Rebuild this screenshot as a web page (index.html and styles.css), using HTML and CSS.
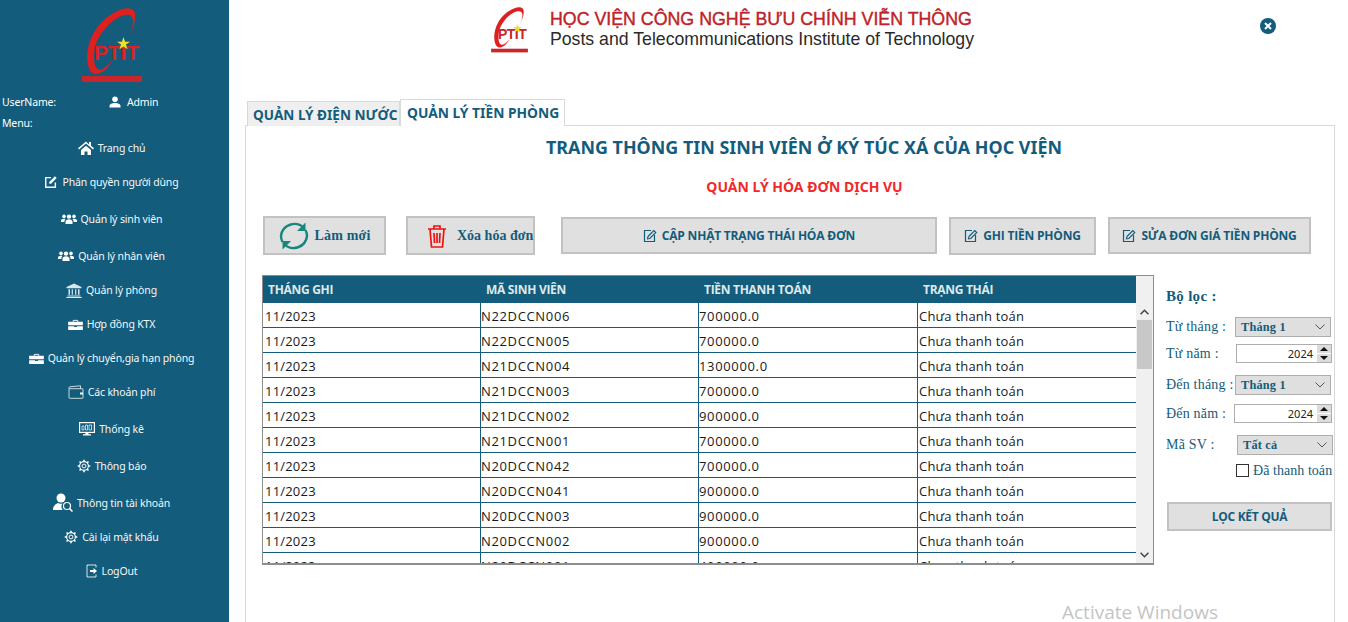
FILE: index.html
```html
<!DOCTYPE html>
<html lang="vi">
<head>
<meta charset="utf-8">
<title>Quản lý tiền phòng</title>
<link rel="stylesheet" href="styles.css">
</head>
<body>
<svg class="defs" width="0" height="0" aria-hidden="true">
  <defs>
    <symbol id="i-edit" viewBox="0 0 16 16"><path d="M13 8.500V14H2V3h6" fill="none" stroke="currentColor" stroke-width="1.600"/><path d="M6 8l6.500-6.500 2 2L8 10H6z" fill="currentColor"/></symbol>
    <symbol id="i-group" viewBox="0 0 16 10"><circle cx="8" cy="2.600" r="2.200" fill="currentColor"/><circle cx="3" cy="2.400" r="1.800" fill="currentColor"/><circle cx="13" cy="2.400" r="1.800" fill="currentColor"/><path d="M4.500 10V8c0-1.700 1.500-2.700 3.500-2.700s3.500 1 3.500 2.700v2z" fill="currentColor"/><path d="M0 8V6.500c0-1 1.300-1.700 3-1.700.6 0 1 .1 1.400.2C3.700 5.700 3.400 6.700 3.400 8zM16 8V6.500c0-1-1.300-1.700-3-1.700-.6 0-1 .1-1.400.2.700.7 1 1.700 1 3z" fill="currentColor"/></symbol>
    <symbol id="i-case" viewBox="0 0 16 12"><path d="M0 3h16v3.800H0zM0 7.800h6.500v1h3v-1H16V12H0z" fill="currentColor"/><path d="M5.500 3V1.500h5V3" fill="none" stroke="currentColor"/></symbol>
    <symbol id="i-gear" viewBox="0 0 16 16"><circle cx="8" cy="8" r="5" fill="none" stroke="currentColor" stroke-width="1.300"/><circle cx="8" cy="8" r="2.200" fill="none" stroke="currentColor" stroke-width="1.100"/><path d="M8 .8v2.400M8 12.800v2.400M.8 8h2.400M12.800 8h2.400M2.900 2.900l1.700 1.700M11.400 11.400l1.700 1.700M2.900 13.100l1.700-1.700M11.400 4.600l1.700-1.700" stroke="currentColor" stroke-width="1.800"/></symbol>
    <symbol id="i-pen" viewBox="0 0 14 14"><path d="M8 1.500H1.500v11h10V6" fill="none" stroke="currentColor" stroke-width="1.200"/><path d="M5 7.500L10.800 1.500l2 2L6.800 9.500l-2.300.4z" fill="none" stroke="currentColor" stroke-width="1.100"/></symbol>
    <symbol id="i-swoosh" viewBox="0 0 60 75">
      <path d="M46 30C52 20 55 8 52 3 48-3 33 1 20 14 8 26 3 44 6 57c2 9 8 11 14 7 4-2 8-7 10-12-4 6-10 11-14 9-4-2-5-11-3-22C17 25 30 10 43 7c5-1 8 1 8 6 0 6-2 11-5 17z" fill="#df2020"/>
      <rect x="0" y="68" width="60" height="6" fill="#c9252b"/>
    </symbol>
    <symbol id="i-star" viewBox="0 0 20 20"><path d="M10 0l2.400 7.200H20l-6.200 4.500 2.400 7.300L10 14.500 3.800 19l2.400-7.300L0 7.200h7.600z" fill="#f0e020"/></symbol>
  </defs>
</svg>

<div class="app">
  <aside class="sidebar">
    <div class="brand">
      <div class="logo">
        <svg class="logo-art"><use href="#i-swoosh"/></svg>
        <span class="logo-text">PTIT</span>
        <svg class="logo-star"><use href="#i-star"/></svg>
      </div>
    </div>
    <div class="user-row">
      <span class="user-label">UserName:</span>
      <span class="user-name">
        <svg class="i-user" viewBox="0 0 12 12"><circle cx="6" cy="3.200" r="2.800" fill="currentColor"/><path d="M.5 11.500V10c0-1.800 2.500-3 5.500-3s5.500 1.200 5.500 3v1.500z" fill="currentColor"/></svg>
        Admin
      </span>
    </div>
    <div class="menu-label">Menu:</div>
    <nav class="nav">
      <a class="nav-item">
        <svg class="ic ic-home" viewBox="0 0 16 14"><path d="M8 .5L0 7.300l1 1.200L8 2.600l7 5.900 1-1.200-3-2.500V1h-2v2.600zM3 9l5-4.200L13 9v5H9.500v-3.500h-3V14H3z" fill="currentColor"/></svg>
        Trang chủ</a>
      <a class="nav-item"><svg class="ic ic-edit"><use href="#i-edit"/></svg>Phân quyền người dùng</a>
      <a class="nav-item tall"><svg class="ic ic-group"><use href="#i-group"/></svg>Quản lý sinh viên</a>
      <a class="nav-item tall"><svg class="ic ic-group"><use href="#i-group"/></svg>Quản lý nhân viên</a>
      <a class="nav-item">
        <svg class="ic ic-bank" viewBox="0 0 16 15"><path d="M8 .5L.5 4v1.200h15V4zM2.500 6.200h1.500v5.600H2.500zM5.700 6.200h1.200v5.600H5.700zM9.100 6.200h1.200v5.600H9.100zM12 6.200h1.500v5.600H12zM1.500 12.500h13v1h-13zM.3 14h15.400v1H.3z" fill="currentColor" opacity=".85"/></svg>
        Quản lý phòng</a>
      <a class="nav-item"><svg class="ic ic-case"><use href="#i-case"/></svg>Hợp đồng KTX</a>
      <a class="nav-item"><svg class="ic ic-case"><use href="#i-case"/></svg>Quản lý chuyển,gia hạn phòng</a>
      <a class="nav-item">
        <svg class="ic ic-wallet" viewBox="0 0 16 14"><path d="M1 3.500V12.500c0 .5.300.8.800.8h12.700c.3 0 .5-.2.500-.5V4.200c0-.3-.2-.5-.5-.5H1.700C1.300 3.700 1 3.300 1 2.800s.3-1 .8-1L12.500.8V3.500" fill="none" stroke="currentColor" stroke-width=".9" opacity=".85"/><rect x="12" y="7.500" width="3" height="2" fill="currentColor"/></svg>
        Các khoản phí</a>
      <a class="nav-item tall">
        <svg class="ic ic-monitor" viewBox="0 0 16 14"><rect x=".6" y=".6" width="14.800" height="9.800" fill="none" stroke="currentColor" stroke-width="1.200"/><path d="M3 4h2v4H3zM6.500 3h2v5h-2zM10 3h2.500v5H10z" fill="none" stroke="currentColor" stroke-width=".7"/><path d="M6.500 11h3v1.300H12V13.500H4V12.300h2.500z" fill="currentColor"/></svg>
        Thống kê</a>
      <a class="nav-item tall"><svg class="ic ic-gear"><use href="#i-gear"/></svg>Thông báo</a>
      <a class="nav-item tall">
        <svg class="ic ic-account" viewBox="0 0 20 20"><circle cx="8" cy="5" r="4.500" fill="currentColor"/><path d="M0 17c0-4 2.500-6 5-7 1.500 1 3 1 4.500.4-1.500 2-1.500 4.500.3 6.600z" fill="currentColor"/><circle cx="14" cy="13" r="3.500" fill="none" stroke="currentColor" stroke-width="1.200"/><path d="M16.500 15.500l3 3" stroke="currentColor" stroke-width="1.500"/></svg>
        Thông tin tài khoản</a>
      <a class="nav-item"><svg class="ic ic-gear"><use href="#i-gear"/></svg>Cài lại mật khẩu</a>
      <a class="nav-item">
        <svg class="ic ic-logout" viewBox="0 0 12 14"><path d="M10 3.500V1H1v12h9v-2.500" fill="none" stroke="currentColor" stroke-width="1" opacity=".85"/><path d="M4 6h3.500V4l3.500 3-3.500 3V8H4z" fill="currentColor"/></svg>
        LogOut</a>
    </nav>
  </aside>

  <main class="content">
    <header class="topbar">
      <div class="org">
        <div class="org-logo">
          <svg class="org-art"><use href="#i-swoosh"/></svg>
          <span class="org-logo-text">PTIT</span>
          <svg class="org-star"><use href="#i-star"/></svg>
        </div>
        <div class="org-names">
          <div class="org-vi">HỌC VIỆN CÔNG NGHỆ BƯU CHÍNH VIỄN THÔNG</div>
          <div class="org-en">Posts and Telecommunications Institute of Technology</div>
        </div>
      </div>
      <svg class="close" viewBox="0 0 16 16"><circle cx="8" cy="8" r="8" fill="#135c7b"/><path d="M5 5l6 6M11 5l-6 6" stroke="#fff" stroke-width="2"/></svg>
    </header>

    <div class="tabs">
      <div class="tab">QUẢN LÝ ĐIỆN NƯỚC</div>
      <div class="tab active">QUẢN LÝ TIỀN PHÒNG</div>
    </div>

    <section class="panel">
      <h1 class="title">TRANG THÔNG TIN SINH VIÊN Ở KÝ TÚC XÁ CỦA HỌC VIỆN</h1>
      <h2 class="subtitle">QUẢN LÝ HÓA ĐƠN DỊCH VỤ</h2>

      <div class="actions">
        <button class="btn btn-serif btn-refresh">
          <svg class="ic-refresh" viewBox="0 0 32 32"><path d="M26 8A13.500 13.500 0 0 0 3 16a13 13 0 0 0 1.500 6M6 24A13.500 13.500 0 0 0 29 16a13 13 0 0 0-1.500-6" fill="none" stroke="#17877d" stroke-width="2.400"/><path d="M27.500 2.500v8.500H19zM4.500 29.500V21H13z" fill="#17877d"/></svg>
          Làm mới</button>
        <button class="btn btn-serif btn-delete">
          <svg class="ic-trash" viewBox="0 0 20 24"><path d="M1 5h18M7 5V2h6v3M3 5l1.500 18h11L17 5M7 9l.5 10M10 9v10M13 9l-.5 10" fill="none" stroke="#f01010" stroke-width="1.700"/></svg>
          Xóa hóa đơn</button>
        <button class="btn btn-sans btn-status"><svg class="ic-pen"><use href="#i-pen"/></svg>CẬP NHẬT TRẠNG THÁI HÓA ĐƠN</button>
        <button class="btn btn-sans btn-record"><svg class="ic-pen"><use href="#i-pen"/></svg>GHI TIỀN PHÒNG</button>
        <button class="btn btn-sans btn-price"><svg class="ic-pen"><use href="#i-pen"/></svg>SỬA ĐƠN GIÁ TIỀN PHÒNG</button>
      </div>

      <div class="lower">
        <div class="table-wrap">
          <div class="table-scroll">
            <table class="grid">
              <thead>
                <tr><th>THÁNG GHI</th><th>MÃ SINH VIÊN</th><th>TIỀN THANH TOÁN</th><th>TRẠNG THÁI</th></tr>
              </thead>
              <tbody>
                <tr><td>11/2023</td><td>N22DCCN006</td><td>700000.0</td><td>Chưa thanh toán</td></tr>
                <tr><td>11/2023</td><td>N22DCCN005</td><td>700000.0</td><td>Chưa thanh toán</td></tr>
                <tr><td>11/2023</td><td>N21DCCN004</td><td>1300000.0</td><td>Chưa thanh toán</td></tr>
                <tr><td>11/2023</td><td>N21DCCN003</td><td>700000.0</td><td>Chưa thanh toán</td></tr>
                <tr><td>11/2023</td><td>N21DCCN002</td><td>900000.0</td><td>Chưa thanh toán</td></tr>
                <tr><td>11/2023</td><td>N21DCCN001</td><td>700000.0</td><td>Chưa thanh toán</td></tr>
                <tr><td>11/2023</td><td>N20DCCN042</td><td>700000.0</td><td>Chưa thanh toán</td></tr>
                <tr><td>11/2023</td><td>N20DCCN041</td><td>900000.0</td><td>Chưa thanh toán</td></tr>
                <tr><td>11/2023</td><td>N20DCCN003</td><td>900000.0</td><td>Chưa thanh toán</td></tr>
                <tr><td>11/2023</td><td>N20DCCN002</td><td>900000.0</td><td>Chưa thanh toán</td></tr>
                <tr><td>11/2023</td><td>N20DCCN001</td><td>400000.0</td><td>Chưa thanh toán</td></tr>
              </tbody>
            </table>
          </div>
          <div class="scrollbar">
            <svg class="sb-arrow sb-up" viewBox="0 0 8 5"><path d="M.5 4.500L4 1l3.500 3.500" fill="none" stroke="#444" stroke-width="1.300"/></svg>
            <div class="sb-thumb"></div>
            <svg class="sb-arrow sb-down" viewBox="0 0 8 5"><path d="M.5.500L4 4 7.500.5" fill="none" stroke="#444" stroke-width="1.300"/></svg>
          </div>
        </div>

        <aside class="filter">
          <div class="filter-title">Bộ lọc :</div>
          <div class="f-row f-r1"><span class="f-label">Từ tháng :</span><div class="select s1"><span>Tháng 1</span><svg class="chev" viewBox="0 0 10 6"><path d="M.5.500L5 5 9.500.5" fill="none" stroke="#555"/></svg></div></div>
          <div class="f-row f-r2"><span class="f-label">Từ năm :</span><div class="spinner s2"><span class="spin-val">2024</span><span class="spin-btns"><i class="up"></i><i class="down"></i></span></div></div>
          <div class="f-row f-r3"><span class="f-label">Đến tháng :</span><div class="select s1"><span>Tháng 1</span><svg class="chev" viewBox="0 0 10 6"><path d="M.5.500L5 5 9.500.5" fill="none" stroke="#555"/></svg></div></div>
          <div class="f-row f-r4"><span class="f-label">Đến năm :</span><div class="spinner s4"><span class="spin-val">2024</span><span class="spin-btns"><i class="up"></i><i class="down"></i></span></div></div>
          <div class="f-row f-r5"><span class="f-label">Mã SV :</span><div class="select s5"><span>Tất cả</span><svg class="chev" viewBox="0 0 10 6"><path d="M.5.500L5 5 9.500.5" fill="none" stroke="#555"/></svg></div></div>
          <label class="check"><span class="box"></span>Đã thanh toán</label>
          <button class="btn btn-sans btn-filter">LỌC KẾT QUẢ</button>
        </aside>
      </div>
    </section>
    <div class="watermark">Activate Windows</div>
  </main>
</div>
</body>
</html>
```

FILE: styles.css
```css
* { box-sizing: border-box; }
html, body { margin: 0; height: 100%; overflow: hidden; background: #fff; }
.defs { position: absolute; }
.app { display: flex; width: 1348px; height: 622px; overflow: hidden; }

/* Sidebar */
.sidebar { width: 229px; flex: none; background: #135c7b; color: #fff; font: 10.500px "Noto Sans", sans-serif; letter-spacing: -.15px; }
.brand { height: 92px; display: flex; justify-content: center; padding-top: 8px; }
.logo { position: relative; width: 60px; height: 75px; margin-right: 5px; }
.logo-art { width: 60px; height: 75px; display: block; }
.logo-text { position: absolute; left: 12px; top: 32px; font: 700 21px/26px "Liberation Sans", sans-serif; color: #df2020; white-space: nowrap; }
.logo-star { position: absolute; left: 35px; top: 29px; width: 13px; height: 13px; }
.user-row { display: flex; height: 20px; align-items: center; padding-left: 2px; }
.user-label { width: 107px; }
.user-name { display: flex; align-items: center; gap: 6px; }
.i-user { width: 12px; height: 12px; }
.menu-label { height: 19px; padding: 3px 0 0 2px; line-height: 16px; }
.nav { display: flex; flex-direction: column; width: 223px; }
.nav-item { height: 34px; display: flex; align-items: center; justify-content: center; gap: 4px; white-space: nowrap; color: #f4f8fa; }
.nav-item.tall { margin-top: 3px; }
.ic { flex: none; color: #fff; }
.ic-home { width: 16px; height: 14px; }
.ic-edit { width: 14px; height: 14px; }
.ic-group { width: 16px; height: 10px; }
.ic-bank { width: 16px; height: 15px; }
.ic-case { width: 15px; height: 11px; }
.ic-wallet { width: 16px; height: 14px; }
.ic-monitor { width: 16px; height: 14px; }
.ic-gear { width: 14px; height: 14px; }
.ic-account { width: 20px; height: 20px; }
.ic-logout { width: 12px; height: 14px; }

/* Content */
.content { position: relative; flex: 1; min-width: 0; padding-left: 16px; }
.topbar { height: 99px; position: relative; display: flex; justify-content: center; padding: 7px 0 0 0; }
.org { display: flex; gap: 22px; height: 46px; margin-left: -128px; }
.org-logo { position: relative; width: 37px; height: 46px; flex: none; }
.org-art { width: 37px; height: 46px; display: block; }
.org-logo-text { position: absolute; left: 7px; top: 18px; font: 700 14px/18px "Liberation Sans", sans-serif; color: #c9252b; letter-spacing: -.5px; white-space: nowrap; }
.org-star { position: absolute; left: 22px; top: 17px; width: 9px; height: 9px; }
.org-names { padding-top: 2px; font-family: "Liberation Sans", sans-serif; }
.org-vi { font-size: 17.800px; line-height: 20px; color: #bd2328; -webkit-text-stroke: .4px #bd2328; white-space: nowrap; }
.org-en { font-size: 17.700px; line-height: 20px; color: #2a2a2a; white-space: nowrap; }
.close { position: absolute; right: 72px; top: 18px; width: 16px; height: 16px; }

.tabs { display: flex; align-items: flex-end; height: 27px; padding-left: 2px; position: relative; z-index: 1; }
.tab { height: 25px; width: 153px; background: #efefef; border: 1px solid #d9d9d9; border-bottom: 0; font: 700 13.600px/26px "Noto Sans", sans-serif; color: #135c7b; padding-left: 5px; white-space: nowrap; overflow: hidden; }
.tab.active { height: 27px; width: 165px; background: #fff; font-size: 13.800px; line-height: 25px; padding-left: 6px; }

.panel { width: 1090px; height: 560px; margin-top: -1px; border: 1px solid #d9d9d9; background: #fff; }
.title { margin: 9px 0 0 28px; text-align: center; font: 700 17.900px/24px "Noto Sans", sans-serif; color: #135c7b; }
.subtitle { margin: 18px 0 0 29px; text-align: center; font: 700 14px/20px "Noto Sans", sans-serif; color: #f02a2a; }

.actions { display: flex; align-items: center; margin: 19px 0 0 17px; height: 39px; }
.btn { display: flex; align-items: center; justify-content: center; background: #e0e0e0; border: 2px solid #c2c2c2; color: #135c7b; padding: 0; white-space: nowrap; cursor: pointer; }
.btn-serif { font: 700 14px "Liberation Serif", serif; letter-spacing: .2px; height: 39px; }
.btn-sans { font: 700 12px "Open Sans", sans-serif; letter-spacing: -.2px; height: 37px; gap: 5px; }
.btn-refresh { width: 123px; gap: 4px; }
.btn-delete { width: 129px; margin-left: 20px; gap: 10px; justify-content: flex-start; padding-left: 19px; letter-spacing: 0; }
.btn-status { width: 376px; margin-left: 26px; }
.btn-record { width: 147px; margin-left: 12px; height: 38px; }
.btn-price { width: 203px; margin-left: 12px; }
.ic-refresh { width: 32px; height: 32px; flex: none; }
.ic-trash { width: 20px; height: 24px; flex: none; }
.ic-pen { width: 14px; height: 14px; flex: none; }

.lower { display: flex; margin: 20px 0 0 16px; align-items: flex-start; }
.table-wrap { width: 892px; height: 290px; flex: none; display: flex; border: 1px solid #8d8d8d; border-width: 1px 1px 2px 1px; background: #fff; }
.table-scroll { width: 873px; height: 287px; overflow: hidden; }
.grid { width: 873px; border-collapse: separate; border-spacing: 0; table-layout: fixed; font: 13px "Open Sans", sans-serif; color: #1a1a1a; }
.grid th { height: 27px; padding: 0 0 0 5px; background: #135c7b; color: #dfe8ec; font: 700 12px "Open Sans", sans-serif; letter-spacing: -.3px; text-align: left; white-space: nowrap; }
.grid td { height: 25px; padding: 1px 0 0 0; border-bottom: 1px solid #135c7b; border-right: 1px solid #135c7b; white-space: nowrap; letter-spacing: .2px; }
.grid td:nth-child(1) { padding-left: 2px; }
.grid td:nth-child(2), .grid td:nth-child(3) { letter-spacing: .65px; }
.grid td:nth-child(4) { padding-left: 1px; border-right: 0; }
.grid th:nth-child(1), .grid td:nth-child(1) { width: 218px; }
.grid th:nth-child(2), .grid td:nth-child(2) { width: 218px; }
.grid th:nth-child(3), .grid td:nth-child(3) { width: 219px; }
.scrollbar { position: relative; flex: 1; background: #f0f0f0; }
.sb-arrow { position: absolute; left: 4px; width: 9px; height: 6px; }
.sb-up { top: 33px; }
.sb-down { bottom: 5px; }
.sb-thumb { position: absolute; left: 1px; right: 1px; top: 44px; height: 49px; background: #c8c8c8; }

/* Filter */
.filter { width: 170px; flex: none; margin-left: 12px; color: #135c7b; font: 14px "Liberation Serif", serif; }
.filter-title { font-weight: 700; font-size: 15px; line-height: 20px; margin-top: 11px; letter-spacing: .3px; }
.f-row { display: flex; align-items: center; letter-spacing: .2px; }
.f-label { white-space: nowrap; width: 69px; flex: none; }
.f-r1 { margin-top: 11px; height: 20px; }
.f-r2 { margin-top: 7px; height: 19px; }
.f-r3 { margin-top: 12px; height: 20px; }
.f-r4 { margin-top: 9px; height: 19px; }
.f-r5 { margin-top: 12px; height: 20px; }
.f-r4 .f-label { width: 68px; }
.select { height: 20px; width: 96px; flex: none; display: flex; align-items: center; justify-content: space-between; padding: 0 5px; background: #dfdfdf; border: 1px solid #aeaeae; font-weight: 700; font-size: 12.300px; }
.s5 { margin-left: 2px; }
.chev { width: 10px; height: 6px; }
.spinner { height: 19px; flex: none; display: flex; background: #fff; border: 1px solid #aeaeae; font: 11px "Noto Sans", sans-serif; color: #222; letter-spacing: 0; }
.s2 { width: 96px; margin-left: 1px; }
.s4 { width: 98px; }
.spin-val { flex: 1; text-align: right; line-height: 17px; padding-right: 3px; }
.spin-btns { width: 15px; display: flex; flex-direction: column; gap: 1px; background: #fff; padding: 0 0 0 1px; }
.spin-btns i { flex: 1; background: #dcdcdc; position: relative; display: block; }
.spin-btns i::after { content: ""; position: absolute; left: 3px; top: 2px; border-left: 4px solid transparent; border-right: 4px solid transparent; }
.spin-btns .up::after { border-bottom: 4px solid #111; }
.spin-btns .down::after { border-top: 4px solid #111; }
.check { display: flex; align-items: center; gap: 4px; margin: 8px 0 0 70px; height: 15px; white-space: nowrap; letter-spacing: .05px; }
.box { width: 13px; height: 13px; border: 1px solid #333; background: #fff; flex: none; }
.btn-filter { width: 165px; height: 29px; margin: 24px 0 0 1px; letter-spacing: -.3px; }

.watermark { position: absolute; left: 833px; top: 599px; font: 19px "Open Sans", sans-serif; color: #c4c4c4; white-space: nowrap; }
```
